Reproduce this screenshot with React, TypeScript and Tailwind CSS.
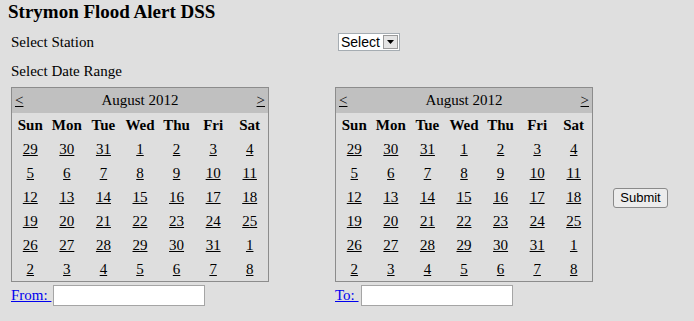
const WEEKS = [
  [29, 30, 31, 1, 2, 3, 4],
  [5, 6, 7, 8, 9, 10, 11],
  [12, 13, 14, 15, 16, 17, 18],
  [19, 20, 21, 22, 23, 24, 25],
  [26, 27, 28, 29, 30, 31, 1],
  [2, 3, 4, 5, 6, 7, 8],
];
const DAYS = ["Sun", "Mon", "Tue", "Wed", "Thu", "Fri", "Sat"];

function Calendar() {
  return (
    <div className="w-[258px] border border-[#8c8c8c] bg-[#dedede]">
      <div className="flex h-[25px] items-center justify-between bg-[#c0c0c0] px-[3px] text-[15px] text-black">
        <a className="underline">&lt;</a>
        <span>August 2012</span>
        <a className="underline">&gt;</a>
      </div>
      <div className="grid grid-cols-7">
        {DAYS.map((d) => (
          <div key={d} className="flex h-[24px] items-center justify-center text-[15px] font-bold">
            {d}
          </div>
        ))}
        {WEEKS.flat().map((n, i) => (
          <div key={i} className="flex h-[24px] items-center justify-center text-[15px]">
            <a className="underline">{n}</a>
          </div>
        ))}
      </div>
    </div>
  );
}

export default function App() {
  return (
    <div className="min-h-[321px] bg-[#dfdfdf] px-[8px] font-['Liberation_Serif',serif] text-black">
      <h1 className="h-[28px] pt-[1px] text-[19px] font-bold leading-[22px]">Strymon Flood Alert DSS</h1>
      <div className="ml-[3px] grid grid-cols-[324px_278px_auto]">
        <div className="flex h-[28px] items-center text-[15px]">Select Station</div>
        <div className="flex h-[28px] items-center pl-[3px]">
          <div className="flex h-[18px] w-[62px] items-stretch border border-[#a5acb2] bg-white font-['Liberation_Sans',sans-serif] text-[14px]">
            <span className="flex flex-1 items-center pl-[2px]">Select</span>
            <span className="m-[1px] flex w-[15px] items-center justify-center border border-[#9a9a9a] bg-[#e4e4e4]">
              <svg width="7" height="4" viewBox="0 0 7 4"><path d="M0 0h7L3.5 4z" fill="#000" /></svg>
            </span>
          </div>
        </div>
        <div />
        <div className="col-span-3 flex h-[31px] items-center text-[15px]">Select Date Range</div>
        <div>
          <Calendar />
        </div>
        <div>
          <Calendar />
        </div>
        <div className="flex items-center pt-[26px]">
          <button className="h-[20px] w-[55px] rounded-[3px] border border-[#8a8a8a] bg-[#ececec] font-['Liberation_Sans',sans-serif] text-[13px] leading-none">
            Submit
          </button>
        </div>
        <div className="flex h-[27px] items-center gap-[2px] text-[15px]">
          <a className="text-[#0000ee] underline">From:&nbsp;</a>
          <input className="h-[21px] w-[152px] border border-[#a5a5a5] bg-white" />
        </div>
        <div className="flex h-[27px] items-center gap-[2px] text-[15px]">
          <a className="text-[#0000ee] underline">To:&nbsp;</a>
          <input className="h-[21px] w-[152px] border border-[#a5a5a5] bg-white" />
        </div>
        <div />
      </div>
    </div>
  );
}
